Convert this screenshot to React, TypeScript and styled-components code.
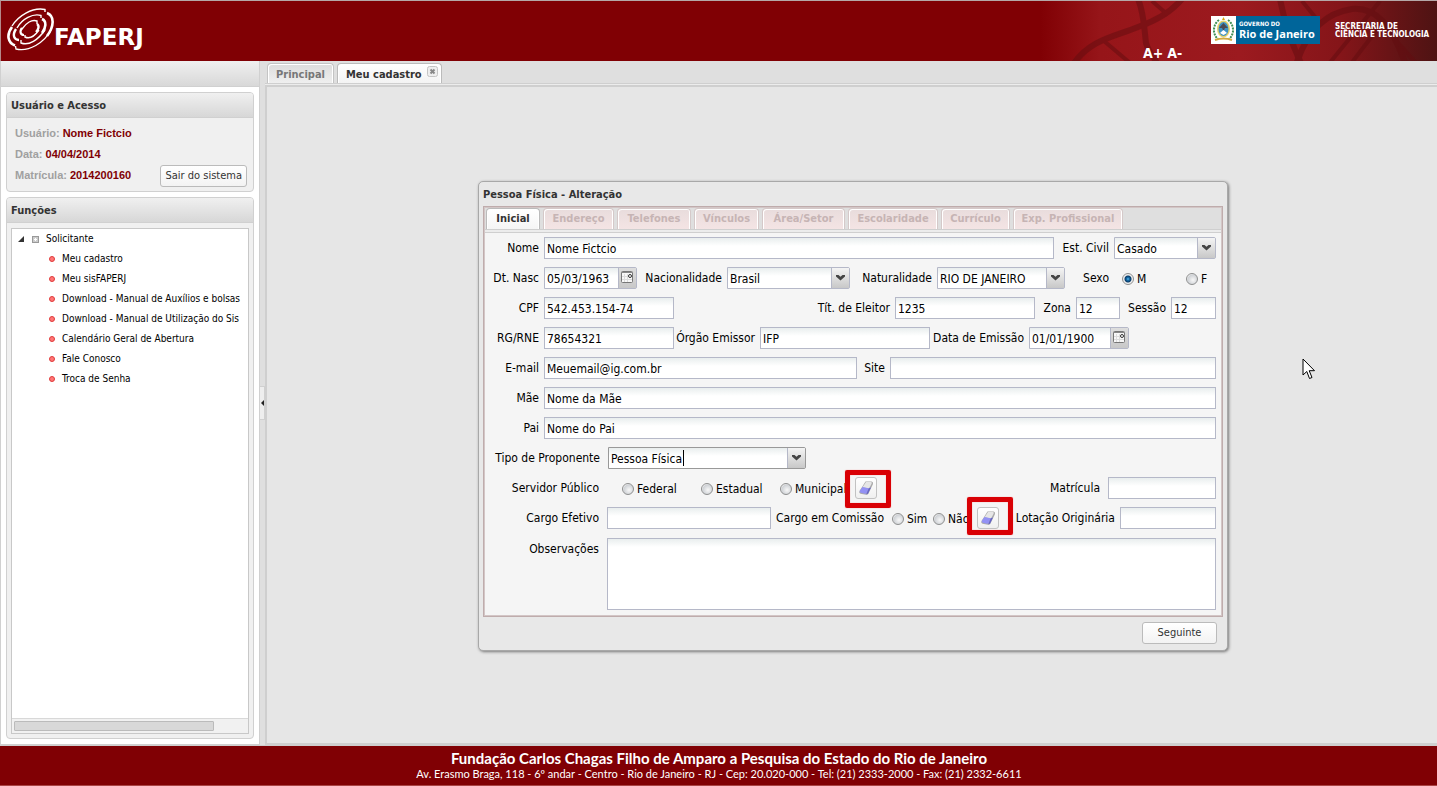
import React from "react";
import styled, { createGlobalStyle } from "styled-components";

const GlobalStyle = createGlobalStyle`
  *, *::before, *::after { box-sizing: border-box; }
  body {
    margin: 0;
    font-family: "DejaVu Sans Condensed", "DejaVu Sans", sans-serif;
    font-size: 11px;
    line-height: 14px;
    color: #000;
  }
  button, input, select, textarea { font: inherit; color: inherit; margin: 0; border-radius: 0; }
`;

const Page = styled.div`
  min-height: 100vh;
  display: grid;
  grid-template-columns: minmax(0, 1fr);
  grid-template-rows: 61px minmax(0, 1fr) 41px;
  background: #dfdfdf;
`;

/* ---------- header ---------- */

const Header = styled.header`
  display: flex;
  justify-content: space-between;
  border-top: 1px solid #b5a8a8;
  border-left: 1px solid #b5898a;
  background: #800004;
  color: #fff;
`;

const Brand = styled.a`
  display: flex;
  align-items: flex-start;
  padding: 7px 0 0 6px;
  color: #fff;
  text-decoration: none;
`;

const BrandName = styled.span`
  padding-top: 16px;
  font-family: "DejaVu Sans", sans-serif;
  font-weight: 700;
  font-size: 23px;
  line-height: 26px;
`;

const HeaderArt = styled.div`
  display: grid;
  width: 397px;
  overflow: hidden;
  background: linear-gradient(90deg, #800004 0, #961519 60px, #9c1a1f 200px, #851519 300px, #4e1313 397px);

  > * { grid-area: 1 / 1; }
`;

const HeaderTools = styled.div`
  display: flex;
  align-items: flex-start;
  padding: 15px 4px 0 103px;
`;

const FontSizer = styled.div`
  display: flex;
  gap: 4px;
  padding-top: 29px;
  width: 68px;
`;

const SizeButton = styled.button`
  border: 0;
  padding: 0;
  background: none;
  color: #fff;
  font-weight: 700;
  font-size: 14px;
  line-height: 16px;
  cursor: pointer;
`;

const Government = styled.div`
  display: flex;
  align-items: center;
  width: 109px;
  height: 28px;
  margin-right: 15px;
  background: #00659a;
`;

const GovernmentText = styled.div`
  display: flex;
  flex-direction: column;
  padding-left: 3px;
  font-weight: 700;
  white-space: nowrap;
`;

const Small = styled.span`
  font-size: 6px;
  line-height: 8px;
`;

const StateName = styled.span`
  font-family: "Open Sans", sans-serif;
  font-size: 11px;
  line-height: 12px;
`;

const Department = styled.div`
  padding-top: 7px;
  font-weight: 700;
  font-size: 8px;
  line-height: 8px;
  white-space: nowrap;
`;

/* ---------- sidebar ---------- */

const Main = styled.div`
  display: grid;
  grid-template-columns: 260px 5px minmax(0, 1fr);
`;

const Sidebar = styled.aside`
  display: flex;
  flex-direction: column;
  min-width: 0;
  border: 1px solid #d0d0d0;
  border-top: 0;
  background: #fff;
`;

const SidebarBar = styled.div`
  height: 26px;
  border-bottom: 1px solid #d0d0d0;
  background: linear-gradient(#f0f0f0, #d8d8d8);
`;

const SidebarBody = styled.div`
  flex: 1;
  display: flex;
  flex-direction: column;
  gap: 5px;
  padding: 5px;
`;

const Panel = styled.section<{ $grow?: boolean }>`
  display: flex;
  flex-direction: column;
  flex: ${(p) => (p.$grow ? "1" : "none")};
  min-width: 0;
  border: 1px solid #d0d0d0;
  border-radius: 4px;
  background: #f0f0f0;
`;

const PanelTitle = styled.h2`
  margin: 0;
  padding: 5px 4px 4px;
  height: 25px;
  border-bottom: 1px solid #d0d0d0;
  border-radius: 3px 3px 0 0;
  background: linear-gradient(#f0f0f0, #d7d7d7);
  color: #333;
  font-size: 11px;
  line-height: 16px;
`;

const UserInfo = styled.div`
  display: flex;
  justify-content: space-between;
  align-items: flex-end;
  padding: 8px 6px 4px 8px;
`;

const Facts = styled.dl`
  display: flex;
  flex-direction: column;
  gap: 7px;
  margin: 0;
  padding-bottom: 5px;
  font-family: "Liberation Sans", Arial, sans-serif;
  font-weight: 700;
`;

const Fact = styled.div`
  display: flex;
  gap: 3px;
  dt { color: #a0a0a0; }
  dd { margin: 0; color: #800004; }
`;

const PlainButton = styled.button<{ $width?: number }>`
  height: 22px;
  width: ${(p) => (p.$width ? p.$width + "px" : "auto")};
  padding: 0 4px;
  border: 1px solid #bbb;
  border-radius: 3px;
  background: linear-gradient(#fff, #f3f3f3);
  color: #333;
  line-height: 20px;
  white-space: nowrap;
`;

const TreeBox = styled.div`
  flex: 1;
  display: flex;
  flex-direction: column;
  justify-content: space-between;
  margin: 5px 4px 4px;
  border: 1px solid #c8c8c8;
  background: #fff;
`;

const Tree = styled.ul`
  margin: 0;
  padding: 0;
  list-style: none;
  overflow: hidden;
  font-size: 10px;
`;

const TreeRoot = styled.li`
  display: flex;
  align-items: center;
  height: 20px;
  padding-left: 6px;
`;

const TreeItem = styled.li`
  display: flex;
  align-items: center;
  gap: 7px;
  height: 20px;
  padding-left: 37px;
  white-space: nowrap;
  a { color: #000; text-decoration: none; }
`;

const Bullet = styled.span`
  flex: none;
  width: 6px;
  height: 6px;
  border: 1px solid #e03a3a;
  border-radius: 50%;
  background: #f77;
`;

const RootLabel = styled.span`
  padding-left: 7px;
`;

const ScrollTrack = styled.div`
  height: 15px;
  padding: 2px 34px 2px 2px;
  border-top: 1px solid #d8d8d8;
  background: #f1f1f1;
`;

const ScrollThumb = styled.div`
  height: 10px;
  border: 1px solid #bbb;
  border-radius: 1px;
  background: #d8d8d8;
`;

const Splitter = styled.button`
  display: flex;
  align-items: center;
  padding: 0;
  border: 0;
  background: #dfdfdf;
`;

const SplitHandle = styled.span`
  display: flex;
  align-items: center;
  width: 5px;
  height: 34px;
  border: 1px solid #d0d0d0;
  border-left: 0;
  background: #eee;
`;

/* ---------- workspace ---------- */

const Workspace = styled.main`
  display: flex;
  flex-direction: column;
  min-width: 0;
`;

const TabStrip = styled.div`
  display: flex;
  gap: 3px;
  height: 22px;
  padding: 2px 0 0 2px;
`;

const PageTab = styled.button<{ $active?: boolean }>`
  display: flex;
  align-items: flex-start;
  gap: 5px;
  padding: ${(p) => (p.$active ? "0 3px 0 8px" : "0 8px")};
  border: 1px solid ${(p) => (p.$active ? "#bbb" : "#c4c4c4")};
  border-bottom: 0;
  border-radius: 4px 4px 0 0;
  box-shadow: inset 1px 1px 0 #fff, inset -1px 0 0 #fff;
  background: ${(p) => (p.$active ? "linear-gradient(#fff, #f3f3f3)" : "linear-gradient(#dcdcdc, #efefef)")};
  color: ${(p) => (p.$active ? "#333" : "#777")};
  font-weight: 700;
  line-height: 21px;
`;

const CloseMark = styled.svg`
  margin-top: 2px;
`;

const Canvas = styled.div`
  position: relative;
  flex: 1;
  display: flex;
  align-items: center;
  justify-content: center;
  padding: 2px 0 0 2px;
  border-left: 2px solid #cfcfcf;
  border-bottom: 2px solid #cfcfcf;
  background: #e6e6e6;
`;

const StripLine = styled.div`
  height: 4px;
  border-top: 1px solid #cfcfcf;
  border-bottom: 2px solid #cfcfcf;
  background: #ececec;
`;

const Pointer = styled.svg`
  position: absolute;
  top: 271px;
  right: 121px;
`;

/* ---------- form window ---------- */

const FormWindow = styled.form`
  width: 750px;
  max-width: 100%;
  padding: 4px 4px 6px;
  border: 1px solid #a8a8a8;
  border-radius: 5px;
  box-shadow: 1px 1px 3px #777;
  background: #e8e8e8;
`;

const WindowTitle = styled.h1`
  margin: 0;
  height: 20px;
  color: #333;
  font-size: 11px;
  line-height: 18px;
`;

const FormPanel = styled.div`
  border: 1px solid #bfacac;
  box-shadow: inset 1px 1px 0 #d3c6c6, inset -1px -1px 0 #d3c6c6;
  padding: 1px;
  background: #f5f5f5;
`;

const FormTabs = styled.div`
  display: flex;
  gap: 3px;
  height: 21px;
  padding-left: 1px;
  background: #dfdfdf;
`;

const FormTab = styled.button<{ $width: number; $active?: boolean }>`
  width: ${(p) => p.$width}px;
  padding: 0;
  border: 1px solid ${(p) => (p.$active ? "#bbb" : "#d5c9c9")};
  border-bottom: 0;
  border-radius: 4px 4px 0 0;
  box-shadow: inset 1px 1px 0 #fff, inset -1px 0 0 #fff;
  background: ${(p) => (p.$active ? "linear-gradient(#fff, #f5f5f5)" : "linear-gradient(#e8dcdc, #f4e4e4)")};
  color: ${(p) => (p.$active ? "#333" : "#c6b4b4")};
  font-weight: 700;
  line-height: 20px;
  white-space: nowrap;
`;

const FormStripLine = styled.div`
  height: 4px;
  border-top: 1px solid #cfcfcf;
  border-bottom: 1px solid #cfcfcf;
  background: #ececec;
`;

const FormBody = styled.div`
  display: flex;
  flex-direction: column;
  gap: 8px;
  padding: 4px 5px 5px 3px;
  font-size: 12px;
`;

const Row = styled.div<{ $columns: string }>`
  display: grid;
  grid-template-columns: ${(p) => p.$columns};
  min-height: 22px;
`;

const Label = styled.label<{ $end?: number }>`
  padding-right: ${(p) => p.$end ?? 5}px;
  text-align: right;
  line-height: 22px;
  white-space: nowrap;
`;

const fieldBackground = "linear-gradient(#e9eeee 0, #fff 8px)";

const TextInput = styled.input`
  width: 100%;
  min-width: 0;
  height: 22px;
  padding: 1px 2px 0;
  border: 1px solid #b5b8c8;
  background: ${fieldBackground};
`;

const NotesRow = styled(Row)`
  padding-top: 1px;
`;

const Notes = styled.textarea`
  display: block;
  width: 100%;
  height: 72px;
  border: 1px solid #b5b8c8;
  background: ${fieldBackground};
  resize: none;
`;

const ComboFrame = styled.div<{ $focused?: boolean }>`
  position: relative;
  display: grid;
  grid-template-columns: minmax(0, 1fr) 18px;
  height: 22px;
  border: 1px solid ${(p) => (p.$focused ? "#999" : "#b5b8c8")};
  border-radius: 0 2px 2px 0;
  background: ${fieldBackground};
`;

const ComboSelect = styled.select`
  grid-area: 1 / 1 / 2 / 3;
  appearance: none;
  padding: 1px 18px 0 2px;
  border: 0;
  outline: 0;
  background: none;
`;

const TriggerFace = styled.span`
  grid-area: 1 / 2;
  display: flex;
  align-items: center;
  justify-content: center;
  border-left: 1px solid #b5b8c8;
  background: linear-gradient(#f4f4f4, #c8c8c8);
  pointer-events: none;
`;

const TextCaret = styled.span`
  position: absolute;
  top: 2px;
  left: 74px;
  width: 1px;
  height: 16px;
  background: #000;
`;

const DateInput = styled.input`
  width: 100%;
  min-width: 0;
  padding: 1px 2px 0;
  border: 0;
  background: none;
`;

const DateTrigger = styled.button`
  display: flex;
  align-items: flex-start;
  justify-content: center;
  padding: 3px 0 0;
  border: 0;
  border-left: 1px solid #b5b8c8;
  background: linear-gradient(#dedede, #c8c8c8);
`;

const Choice = styled.label<{ $start?: number }>`
  display: flex;
  align-items: center;
  gap: 3px;
  padding-left: ${(p) => p.$start ?? 0}px;
  padding-top: 2px;
  white-space: nowrap;
`;

const Radio = styled.input`
  appearance: none;
  flex: none;
  width: 12px;
  height: 12px;
  border: 1px solid #8e8f8f;
  border-radius: 50%;
  background: radial-gradient(circle at 60% 60%, #f8f8f8 0, #cfd2d6 60%, #f4f4f4 75%);

  &:checked {
    background: radial-gradient(circle, #8fd8ff 0, #1778b8 1px, #0b3c69 3px, #eee 4px);
  }
`;

const EraserFrame = styled.div`
  position: relative;
`;

const EraserButton = styled.button`
  display: flex;
  align-items: center;
  justify-content: center;
  width: 22px;
  height: 22px;
  padding: 0;
  border: 1px solid #c2c2c2;
  border-radius: 3px;
  background: linear-gradient(#fff, #f0f0f0);
`;

const Highlight = styled.span<{ $rise: number }>`
  position: absolute;
  top: ${(p) => -p.$rise}px;
  left: -10px;
  width: 46px;
  height: 38px;
  border: 5px solid #d90005;
  border-radius: 2px;
  box-shadow: 0 0 1px #e66, inset 0 0 1px #e66;
  pointer-events: none;
`;

const WindowFooter = styled.div`
  display: flex;
  justify-content: flex-end;
  padding: 5px 6px 0;
`;

/* ---------- footer ---------- */

const Footer = styled.footer`
  padding: 4px 0 0 1px;
  border-top: 1px solid #cfcfcf;
  border-bottom: 1px solid #a44;
  background: #800004;
  color: #fff;
  font-family: Lato, sans-serif;
  font-size: 11px;
  line-height: 16px;
  text-align: center;
`;

const FooterTitle = styled.div`
  font-weight: 700;
  font-size: 15px;
`;

/* ---------- drawings ---------- */

function Swirl() {
  return (
    <svg width="47" height="44" viewBox="0 0 47 44" fill="none" stroke="#fff" aria-hidden="true">
      <path d="M5 18C11 8 25 -1 38 1.500L38 4" strokeWidth="1.400" />
      <path d="M40 5C48 8 47 19 40 28" strokeWidth="2.600" />
      <path d="M44 22C37 35 22 44 9 41L8.500 38" strokeWidth="1.400" />
      <path d="M5 19C-1 27 1 35 8 37.500" strokeWidth="2.600" />
      <path d="M10 20C15 11 26 5 34 7.500L34 10" strokeWidth="1.400" />
      <path d="M35 11C40 13 39 20 35 25" strokeWidth="2.600" />
      <path d="M38 22C31 32 22 38 14 35L14 32" strokeWidth="1.400" />
      <path d="M9 21C5 27 7 32 12 32" strokeWidth="2.400" />
      <path d="M15 21C19 15 25 11 30 13L30 16" strokeWidth="1.400" />
      <path d="M30 16C33 18 31 22 29 24" strokeWidth="2.400" />
      <path d="M32 22C27 29 22 31 18 29L18 27" strokeWidth="1.400" />
      <path d="M15 20C12 24 14 27 17 27" strokeWidth="2.200" />
    </svg>
  );
}

function Helix() {
  return (
    <svg width="397" height="60" viewBox="0 0 397 60" fill="none" stroke="#620d10" aria-hidden="true">
      <g opacity="0.5" strokeWidth="6">
        <path d="M34 62C52 38 74 36 98 26C118 19 132 10 142 -2" />
        <path d="M98 -2C104 12 104 26 106 42C108 50 114 56 118 64" />
        <path d="M64 40L90 62M112 0L128 14" strokeWidth="4" />
      </g>
      <g opacity="0.5" strokeWidth="4">
        <path d="M240 -2C245 24 252 44 262 64" strokeWidth="6" />
        <path d="M256 64C266 32 284 12 312 8C336 6 352 24 366 64" strokeWidth="6" />
        <path d="M288 64L340 0M310 64L342 22M280 22L262 0M340 22L376 62" />
      </g>
    </svg>
  );
}

function CoatOfArms() {
  return (
    <svg width="25" height="28" viewBox="0 0 25 28" aria-hidden="true">
      <rect width="25" height="28" fill="#fff" />
      <path d="M8 4C2 8 1 18 7 23M17 4C23 8 24 18 18 23" fill="none" stroke="#3f8f54" strokeWidth="2" strokeDasharray="2 1" />
      <path d="M12.500 1L14 4H11Z" fill="#d9a514" />
      <ellipse cx="12.500" cy="13" rx="6.500" ry="8.500" fill="#e6d36b" />
      <ellipse cx="12.500" cy="13" rx="5" ry="7" fill="#3d91c4" />
      <path d="M8 12L12.500 7L17 12L14 12L12.500 15L11 12Z" fill="#4b4a52" />
      <path d="M9 17L12.500 14L16 17L12.500 19Z" fill="#fff" />
      <path d="M4 24Q12.500 21 21 24" fill="none" stroke="#d3a93e" strokeWidth="2" />
    </svg>
  );
}

function Arrow() {
  return (
    <svg width="9" height="6" viewBox="0 0 9 6" aria-hidden="true">
      <path d="M0 0H2.500L4.500 1.800L6.500 0H9V1.500L4.500 5.500L0 1.500Z" fill="#444" />
    </svg>
  );
}

function CalendarIcon() {
  return (
    <svg width="13" height="13" viewBox="0 0 13 13" aria-hidden="true">
      <rect x="0.500" y="0.500" width="11" height="11" rx="1" fill="#f8f8f8" stroke="#777" />
      <path d="M1 1.500H11" stroke="#888" />
      <path d="M3.500 3V11M6.500 3V11M1 5.500H8M1 8.500H11" stroke="#dcdcdc" />
      <circle cx="9" cy="5" r="1.500" fill="#fff" stroke="#333" />
    </svg>
  );
}

function EraserIcon() {
  return (
    <svg width="16" height="16" viewBox="0 0 16 16" aria-hidden="true">
      <path d="M7.500 1.500L13.500 1.500Q15.500 1.700 15 4L10.500 13.500Q9.800 15 8 14.800L2.500 13.800Q0.500 13 1.500 11Z" fill="#aaa" />
      <path d="M8 1.900H13Q14.300 2.100 13.600 3.800L11 8.500L4.500 7.200Z" fill="#e6e6e6" />
      <path d="M4.500 7L10.700 8.200L8.800 12.800Q8.200 14 7 13.800L2.800 12.800Q1 12.200 2 10.500Z" fill="#9391f4" />
      <path d="M10.700 8.200L13 7.500L10 13.800L8.200 14.500Z" fill="#6665c8" />
    </svg>
  );
}

/* ---------- composed controls ---------- */

function Combo({ id, value, focused }: { id: string; value: string; focused?: boolean }) {
  return (
    <ComboFrame $focused={focused}>
      <ComboSelect id={id} defaultValue={value}>
        <option>{value}</option>
      </ComboSelect>
      <TriggerFace>
        <Arrow />
      </TriggerFace>
      {focused && <TextCaret />}
    </ComboFrame>
  );
}

function DateField({ id, value }: { id: string; value: string }) {
  return (
    <ComboFrame>
      <DateInput id={id} defaultValue={value} />
      <DateTrigger type="button" aria-label="Abrir calendário">
        <CalendarIcon />
      </DateTrigger>
    </ComboFrame>
  );
}

function ClearChoice({ rise }: { rise: number }) {
  return (
    <EraserFrame>
      <EraserButton type="button" aria-label="Limpar">
        <EraserIcon />
      </EraserButton>
      <Highlight $rise={rise} />
    </EraserFrame>
  );
}

const functions = [
  "Meu cadastro",
  "Meu sisFAPERJ",
  "Download - Manual de Auxílios e bolsas",
  "Download - Manual de Utilização do Sis",
  "Calendário Geral de Abertura",
  "Fale Conosco",
  "Troca de Senha",
];

const formTabs = [
  { label: "Inicial", width: 54 },
  { label: "Endereço", width: 71 },
  { label: "Telefones", width: 74 },
  { label: "Vínculos", width: 65 },
  { label: "Área/Setor", width: 83 },
  { label: "Escolaridade", width: 90 },
  { label: "Currículo", width: 69 },
  { label: "Exp. Profissional", width: 110 },
];

export default function App() {
  return (
    <Page>
      <GlobalStyle />
      <Header>
        <Brand href="#">
          <Swirl />
          <BrandName>FAPERJ</BrandName>
        </Brand>
        <HeaderArt>
          <Helix />
          <HeaderTools>
            <FontSizer>
              <SizeButton type="button">A+</SizeButton>
              <SizeButton type="button">A-</SizeButton>
            </FontSizer>
            <Government>
              <CoatOfArms />
              <GovernmentText>
                <Small>GOVERNO DO</Small>
                <StateName>Rio de Janeiro</StateName>
              </GovernmentText>
            </Government>
            <Department>
              SECRETARIA DE
              <br />
              CIÊNCIA E TECNOLOGIA
            </Department>
          </HeaderTools>
        </HeaderArt>
      </Header>

      <Main>
        <Sidebar>
          <SidebarBar />
          <SidebarBody>
            <Panel>
              <PanelTitle>Usuário e Acesso</PanelTitle>
              <UserInfo>
                <Facts>
                  <Fact><dt>Usuário:</dt><dd>Nome Fictcio</dd></Fact>
                  <Fact><dt>Data:</dt><dd>04/04/2014</dd></Fact>
                  <Fact><dt>Matrícula:</dt><dd>2014200160</dd></Fact>
                </Facts>
                <PlainButton type="button">Sair do sistema</PlainButton>
              </UserInfo>
            </Panel>
            <Panel $grow>
              <PanelTitle>Funções</PanelTitle>
              <TreeBox>
                <Tree>
                  <TreeRoot>
                    <svg width="21" height="8" viewBox="0 0 21 8" aria-hidden="true">
                      <path d="M6 1V7H0Z" fill="#333" />
                      <rect x="14.500" y="1.500" width="6" height="6" fill="#ccc" stroke="#999" />
                      <path d="M17.500 3V6M16 4.500H19" stroke="#fff" />
                    </svg>
                    <RootLabel>Solicitante</RootLabel>
                  </TreeRoot>
                  {functions.map((name) => (
                    <TreeItem key={name}>
                      <Bullet />
                      <a href="#">{name}</a>
                    </TreeItem>
                  ))}
                </Tree>
                <ScrollTrack>
                  <ScrollThumb />
                </ScrollTrack>
              </TreeBox>
            </Panel>
          </SidebarBody>
        </Sidebar>

        <Splitter type="button" aria-label="Recolher menu">
          <SplitHandle>
            <svg width="4" height="6" viewBox="0 0 4 6" aria-hidden="true">
              <path d="M4 0V6L1 3Z" fill="#222" />
            </svg>
          </SplitHandle>
        </Splitter>

        <Workspace>
          <TabStrip>
            <PageTab type="button">Principal</PageTab>
            <PageTab type="button" $active>
              Meu cadastro
              <CloseMark width="11" height="11" viewBox="0 0 11 11" aria-hidden="true">
                <rect x="0.500" y="0.500" width="10" height="10" rx="2" fill="#eee" stroke="#c4c4c4" />
                <path d="M3.500 3.500L7.500 7.500M7.500 3.500L3.500 7.500" stroke="#888" strokeWidth="2" />
              </CloseMark>
            </PageTab>
          </TabStrip>
          <StripLine />
          <Canvas>
            <FormWindow onSubmit={(e) => e.preventDefault()}>
              <WindowTitle>Pessoa Física - Alteração</WindowTitle>
              <FormPanel>
                <FormTabs>
                  {formTabs.map((tab, i) => (
                    <FormTab key={tab.label} type="button" $width={tab.width} $active={i === 0}>
                      {tab.label}
                    </FormTab>
                  ))}
                </FormTabs>
                <FormStripLine />
                <FormBody>
                  <Row $columns="56px minmax(0, 1fr) 60px 102px">
                    <Label htmlFor="nome">Nome</Label>
                    <TextInput id="nome" defaultValue="Nome Fictcio" />
                    <Label htmlFor="civil">Est. Civil</Label>
                    <Combo id="civil" value="Casado" />
                  </Row>
                  <Row $columns="56px 93px 90px 123px 87px 128px minmax(0, 1fr) 72px 30px">
                    <Label htmlFor="nasc">Dt. Nasc</Label>
                    <DateField id="nasc" value="05/03/1963" />
                    <Label htmlFor="nacionalidade">Nacionalidade</Label>
                    <Combo id="nacionalidade" value="Brasil" />
                    <Label htmlFor="naturalidade">Naturalidade</Label>
                    <Combo id="naturalidade" value="RIO DE JANEIRO" />
                    <Label as="span">Sexo</Label>
                    <Choice $start={8}><Radio type="radio" name="sexo" defaultChecked />M</Choice>
                    <Choice><Radio type="radio" name="sexo" />F</Choice>
                  </Row>
                  <Row $columns="56px 130px minmax(0, 1fr) 140px 41px 44px 51px 45px">
                    <Label htmlFor="cpf">CPF</Label>
                    <TextInput id="cpf" defaultValue="542.453.154-74" />
                    <Label htmlFor="titulo">Tít. de Eleitor</Label>
                    <TextInput id="titulo" defaultValue="1235" />
                    <Label htmlFor="zona">Zona</Label>
                    <TextInput id="zona" defaultValue="12" />
                    <Label htmlFor="sessao">Sessão</Label>
                    <TextInput id="sessao" defaultValue="12" />
                  </Row>
                  <Row $columns="56px 130px 86px 170px 99px 100px minmax(0, 1fr)">
                    <Label htmlFor="rg">RG/RNE</Label>
                    <TextInput id="rg" defaultValue="78654321" />
                    <Label htmlFor="orgao">Órgão Emissor</Label>
                    <TextInput id="orgao" defaultValue="IFP" />
                    <Label htmlFor="emissao">Data de Emissão</Label>
                    <DateField id="emissao" value="01/01/1900" />
                  </Row>
                  <Row $columns="56px 313px 33px minmax(0, 1fr)">
                    <Label htmlFor="email">E-mail</Label>
                    <TextInput id="email" defaultValue="Meuemail@ig.com.br" />
                    <Label htmlFor="site">Site</Label>
                    <TextInput id="site" />
                  </Row>
                  <Row $columns="56px minmax(0, 1fr)">
                    <Label htmlFor="mae">Mãe</Label>
                    <TextInput id="mae" defaultValue="Nome da Mãe" />
                  </Row>
                  <Row $columns="56px minmax(0, 1fr)">
                    <Label htmlFor="pai">Pai</Label>
                    <TextInput id="pai" defaultValue="Nome do Pai" />
                  </Row>
                  <Row $columns="120px 198px">
                    <Label htmlFor="tipo" $end={8}>Tipo de Proponente</Label>
                    <Combo id="tipo" value="Pessoa Física" focused />
                  </Row>
                  <Row $columns="119px 94px 79px 75px 22px minmax(0, 1fr) 108px">
                    <Label as="span" $end={8}>Servidor Público</Label>
                    <Choice $start={15}><Radio type="radio" name="servidor" />Federal</Choice>
                    <Choice><Radio type="radio" name="servidor" />Estadual</Choice>
                    <Choice><Radio type="radio" name="servidor" />Municipal</Choice>
                    <ClearChoice rise={7} />
                    <Label htmlFor="matricula" $end={8}>Matrícula</Label>
                    <TextInput id="matricula" />
                  </Row>
                  <Row $columns="119px 164px 121px 41px 44px 22px minmax(0, 1fr) 96px">
                    <Label htmlFor="cargo" $end={8}>Cargo Efetivo</Label>
                    <TextInput id="cargo" />
                    <Label as="span" $end={8}>Cargo em Comissão</Label>
                    <Choice><Radio type="radio" name="comissao" />Sim</Choice>
                    <Choice><Radio type="radio" name="comissao" />Não</Choice>
                    <ClearChoice rise={10} />
                    <Label htmlFor="lotacao">Lotação Originária</Label>
                    <TextInput id="lotacao" />
                  </Row>
                  <NotesRow $columns="119px minmax(0, 1fr)">
                    <Label htmlFor="obs" $end={8}>Observações</Label>
                    <Notes id="obs" />
                  </NotesRow>
                </FormBody>
              </FormPanel>
              <WindowFooter>
                <PlainButton type="submit" $width={75}>Seguinte</PlainButton>
              </WindowFooter>
            </FormWindow>
            <Pointer width="14" height="22" viewBox="0 0 14 22" aria-hidden="true">
              <path d="M1 1V17L4.800 13.500L7.500 20.500L10 19.500L7.200 12.700H12.500Z" fill="#fff" stroke="#000" />
            </Pointer>
          </Canvas>
        </Workspace>
      </Main>

      <Footer>
        <FooterTitle>Fundação Carlos Chagas Filho de Amparo a Pesquisa do Estado do Rio de Janeiro</FooterTitle>
        <div>Av. Erasmo Braga, 118 - 6º andar - Centro - Rio de Janeiro - RJ - Cep: 20.020-000 - Tel: (21) 2333-2000 - Fax: (21) 2332-6611</div>
      </Footer>
    </Page>
  );
}
